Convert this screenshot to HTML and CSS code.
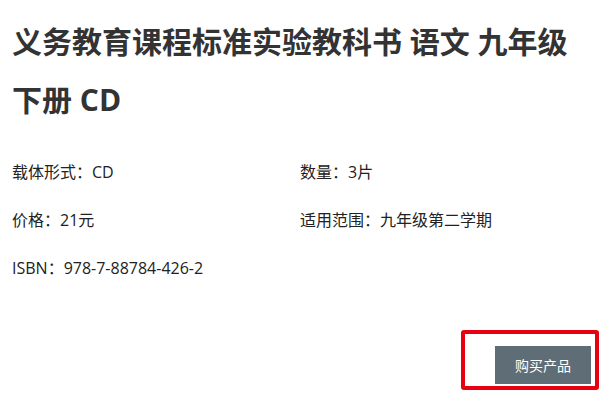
FILE: index.html
```html
<!DOCTYPE html>
<html lang="zh-CN">
<head>
<meta charset="utf-8">
<link rel="stylesheet" href="styles.css">
</head>
<body>
<div class="page">
  <h1 class="title">义务教育课程标准实验教科书 语文 九年级下册 CD</h1>
  <div class="info">
    <div class="item">载体形式：CD</div>
    <div class="item">数量：3片</div>
    <div class="item">价格：21元</div>
    <div class="item">适用范围：九年级第二学期</div>
    <div class="item">ISBN：978-7-88784-426-2</div>
  </div>
  <div class="actions">
    <div class="highlight">
      <button class="buy">购买产品</button>
    </div>
  </div>
</div>
</body>
</html>
```
FILE: styles.css
```css
html, body {
  margin: 0;
  padding: 0;
  background: #fff;
}
body {
  font-family: "Open Sans", "Noto Sans CJK SC", sans-serif;
  color: #333;
}
.page {
  width: 576px;
  padding: 13px 12px 0 12px;
}
.title {
  margin: 0;
  font-size: 30px;
  font-weight: bold;
  line-height: 58px;
  color: #333;
  width: 576px;
}
.info {
  margin-top: 19px;
  display: grid;
  grid-template-columns: 288px 288px;
}
.item {
  font-size: 16px;
  line-height: 48px;
  height: 48px;
  color: #222;
}
.actions {
  margin-top: 38px;
  display: flex;
  justify-content: flex-end;
  margin-right: -11px;
}
.highlight {
  border: 4px solid #e60012;
  border-radius: 3px;
  padding: 12px 4px 2px 30px;
  width: 96px;
  height: 38px;
}
.buy {
  display: block;
  width: 96px;
  height: 38px;
  border: none;
  margin: 0;
  padding: 0;
  background: #5f6e76;
  color: #fff;
  font-family: "Noto Sans CJK SC", sans-serif;
  font-size: 14px;
}
```
